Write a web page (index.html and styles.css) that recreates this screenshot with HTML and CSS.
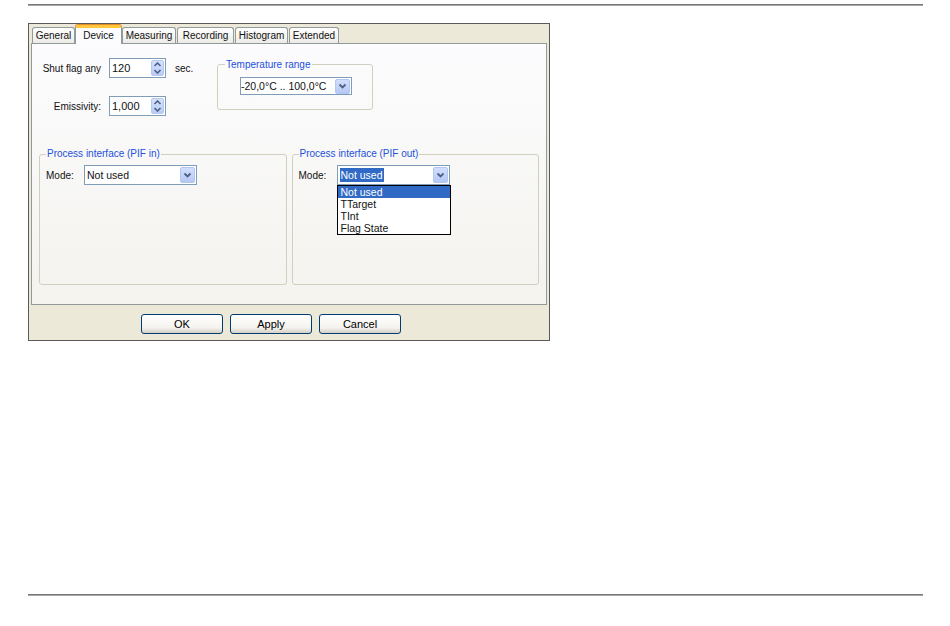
FILE: index.html
```html
<!DOCTYPE html>
<html lang="en">
<head>
    <meta charset="UTF-8">
    <title>Device settings</title>
    <link rel="stylesheet" href="styles.css">
</head>
<body>
<div class="page">
    <div class="rule"></div>

    <div class="dialog">
        <div class="tabs">
            <div class="tab t-general">General</div>
            <div class="tab t-device active">Device</div>
            <div class="tab t-measuring">Measuring</div>
            <div class="tab t-recording">Recording</div>
            <div class="tab t-histogram">Histogram</div>
            <div class="tab t-extended">Extended</div>
        </div>

        <div class="panel">
            <div class="top-row">
                <div class="fields">
                    <span class="lbl">Shut flag any</span>
                    <div class="spin-box">
                        <span class="val">120</span>
                        <span class="spin">
                            <svg width="9" height="5" viewBox="0 0 9 5"><path d="M1.5 4 L4.5 1 L7.5 4" fill="none" stroke="#4d6185" stroke-width="1.6"/></svg>
                            <svg width="9" height="5" viewBox="0 0 9 5"><path d="M1.5 1 L4.5 4 L7.5 1" fill="none" stroke="#4d6185" stroke-width="1.6"/></svg>
                        </span>
                    </div>
                    <span class="unit">sec.</span>

                    <span class="lbl">Emissivity:</span>
                    <div class="spin-box">
                        <span class="val">1,000</span>
                        <span class="spin">
                            <svg width="9" height="5" viewBox="0 0 9 5"><path d="M1.5 4 L4.5 1 L7.5 4" fill="none" stroke="#4d6185" stroke-width="1.6"/></svg>
                            <svg width="9" height="5" viewBox="0 0 9 5"><path d="M1.5 1 L4.5 4 L7.5 1" fill="none" stroke="#4d6185" stroke-width="1.6"/></svg>
                        </span>
                    </div>
                    <span></span>
                </div>

                <fieldset class="group temp">
                    <legend>Temperature range</legend>
                    <div class="combo combo-temp">
                        <span class="val">-20,0°C .. 100,0°C</span>
                        <span class="arrow">
                            <svg width="9" height="6" viewBox="0 0 9 6"><path d="M1.5 1.5 L4.5 4.5 L7.5 1.5" fill="none" stroke="#4d6185" stroke-width="1.8"/></svg>
                        </span>
                    </div>
                </fieldset>
            </div>

            <div class="pif-row">
                <fieldset class="group pif">
                    <legend>Process interface (PIF in)</legend>
                    <div class="mode-row">
                        <span class="mode-lbl">Mode:</span>
                        <div class="combo">
                            <span class="val">Not used</span>
                            <span class="arrow">
                                <svg width="9" height="6" viewBox="0 0 9 6"><path d="M1.5 1.5 L4.5 4.5 L7.5 1.5" fill="none" stroke="#4d6185" stroke-width="1.8"/></svg>
                            </span>
                        </div>
                    </div>
                </fieldset>

                <fieldset class="group pif">
                    <legend>Process interface (PIF out)</legend>
                    <div class="mode-row">
                        <span class="mode-lbl">Mode:</span>
                        <div class="combo open">
                            <span class="val"><span class="sel">Not used</span></span>
                            <span class="arrow">
                                <svg width="9" height="6" viewBox="0 0 9 6"><path d="M1.5 1.5 L4.5 4.5 L7.5 1.5" fill="none" stroke="#4d6185" stroke-width="1.8"/></svg>
                            </span>
                            <ul class="drop">
                                <li class="hi">Not used</li>
                                <li>TTarget</li>
                                <li>TInt</li>
                                <li>Flag State</li>
                            </ul>
                        </div>
                    </div>
                </fieldset>
            </div>
        </div>

        <div class="buttons">
            <button class="btn">OK</button>
            <button class="btn">Apply</button>
            <button class="btn">Cancel</button>
        </div>
    </div>

    <div class="rule bottom"></div>
</div>
</body>
</html>
```

FILE: styles.css
```css
body {
    margin: 0;
    background: #fff;
    font-family: "Liberation Sans", Arial, sans-serif;
    font-size: 10px;
    color: #111;
}

.page {
    padding: 0 27px 0 28px;
}

/* page rules top and bottom */
.rule {
    margin-top: 4px;
    height: 0;
    border-top: 1px solid #777;
    border-bottom: 1px solid #a8a8a8;
}

.rule.bottom {
    margin-top: 253px;
}

/* Dialog */
.dialog {
    margin-top: 17px;
    width: 522px;
    height: 318px;
    box-sizing: border-box;
    border: 1px solid #5a5a5a;
    background: #ece9d8;
    display: flex;
    flex-direction: column;
}

.tabs {
    height: 19px;
    display: flex;
    align-items: flex-end;
    gap: 1px;
    padding-left: 3px;
}

.tab {
    height: 16px;
    line-height: 16px;
    text-align: center;
    border: 1px solid #919b9c;
    border-bottom: none;
    border-radius: 3px 3px 0 0;
    background: linear-gradient(#ffffff, #ecebe6);
    box-sizing: border-box;
}

.t-general { width: 43px; }
.t-device { width: 47px; }
.t-measuring { width: 54px; }
.t-recording { width: 57px; }
.t-histogram { width: 53px; }
.t-extended { width: 50px; }

.tab.active {
    height: 19px;
    line-height: 16px;
    margin: 0 -1px -1px -1px;
    border-top: 3px solid #ffc73c;
    box-shadow: 0 -1px 0 #e68b2c;
    background: #fcfcfe;
    position: relative;
    z-index: 1;
}

.panel {
    height: 262px;
    margin: 0 2px;
    box-sizing: border-box;
    border: 1px solid #919b9c;
    background: linear-gradient(#fcfcfe, #f4f3ee);
    padding: 14px 7px 0 7px;
}

/* top part */
.top-row {
    display: flex;
    align-items: flex-start;
    padding-left: 3px;
}

.fields {
    width: 175px;
    display: grid;
    grid-template-columns: 59px 57px auto;
    column-gap: 8px;
    row-gap: 18px;
    align-items: center;
}

.lbl {
    text-align: right;
    white-space: nowrap;
}

.unit {
    margin-left: 1px;
}

.spin-box {
    height: 20px;
    box-sizing: border-box;
    border: 1px solid #7f9db9;
    background: #fff;
    display: flex;
    align-items: center;
    justify-content: space-between;
}

.spin-box .val {
    padding-left: 2px;
    font-size: 11px;
}

.spin {
    width: 13px;
    height: 16px;
    margin-right: 1px;
    border-radius: 2px;
    background: linear-gradient(#d6e2fc, #b9ccf5);
    border: 1px solid #b6c8f0;
    box-sizing: border-box;
    display: flex;
    flex-direction: column;
    align-items: center;
    justify-content: space-around;
}

.spin svg {
    display: block;
}

/* group boxes */
.group {
    margin: 0;
    border: 1px solid #d0d0bf;
    border-radius: 3px;
    box-sizing: border-box;
}

.group legend {
    color: #2350dc;
    line-height: 12px;
    padding: 0 1px;
}

.temp {
    width: 156px;
    padding: 7px 0 14px 22px;
}

.temp legend {
    margin-left: -15px;
    position: relative;
    top: 1px;
}

.combo {
    position: relative;
    width: 113px;
    height: 20px;
    box-sizing: border-box;
    border: 1px solid #7f9db9;
    background: #fff;
    display: flex;
    align-items: center;
    justify-content: space-between;
}

.combo-temp {
    width: 112px;
    height: 18px;
}

.combo .val {
    padding-left: 2px;
    font-size: 10.5px;
    white-space: nowrap;
}

.combo-temp .val {
    padding-left: 0;
}

.arrow {
    width: 15px;
    height: 16px;
    margin-right: 1px;
    box-sizing: border-box;
    border: 1px solid #b3c6f2;
    border-radius: 2px;
    background: linear-gradient(#d3defb, #b5c8f5);
    display: flex;
    align-items: center;
    justify-content: center;
}

.combo-temp .arrow {
    height: 15px;
}

.sel {
    background: #316ac5;
    color: #fff;
    padding: 1px 1px;
}

/* dropdown list of PIF out */
.drop {
    position: absolute;
    top: calc(100% + 1px);
    left: -1px;
    width: 114px;
    margin: 0;
    padding: 0;
    list-style: none;
    background: #fff;
    border: 1px solid #000;
    box-sizing: border-box;
    z-index: 5;
}

.drop li {
    height: 12px;
    line-height: 12px;
    padding-left: 3px;
    font-size: 10.5px;
}

.drop li.hi {
    background: #316ac5;
    color: #fff;
}

/* PIF groups */
.pif-row {
    margin-top: 32px;
    display: grid;
    grid-template-columns: 1fr 1fr;
    column-gap: 5px;
}

.pif {
    height: 137px;
    padding: 5px 6px 0 6px;
}

.mode-row {
    display: flex;
    align-items: center;
}

.mode-lbl {
    width: 38px;
}

/* bottom buttons */
.buttons {
    flex: 1;
    display: flex;
    align-items: flex-start;
    gap: 7px;
    padding: 9px 0 0 112px;
}

.btn {
    width: 82px;
    height: 20px;
    padding: 0;
    font-family: inherit;
    font-size: 11px;
    color: #000;
    border: 1px solid #003c74;
    border-radius: 3px;
    background: linear-gradient(#ffffff 0%, #f4f3ee 70%, #d6d0c5 100%);
    cursor: pointer;
}
```
